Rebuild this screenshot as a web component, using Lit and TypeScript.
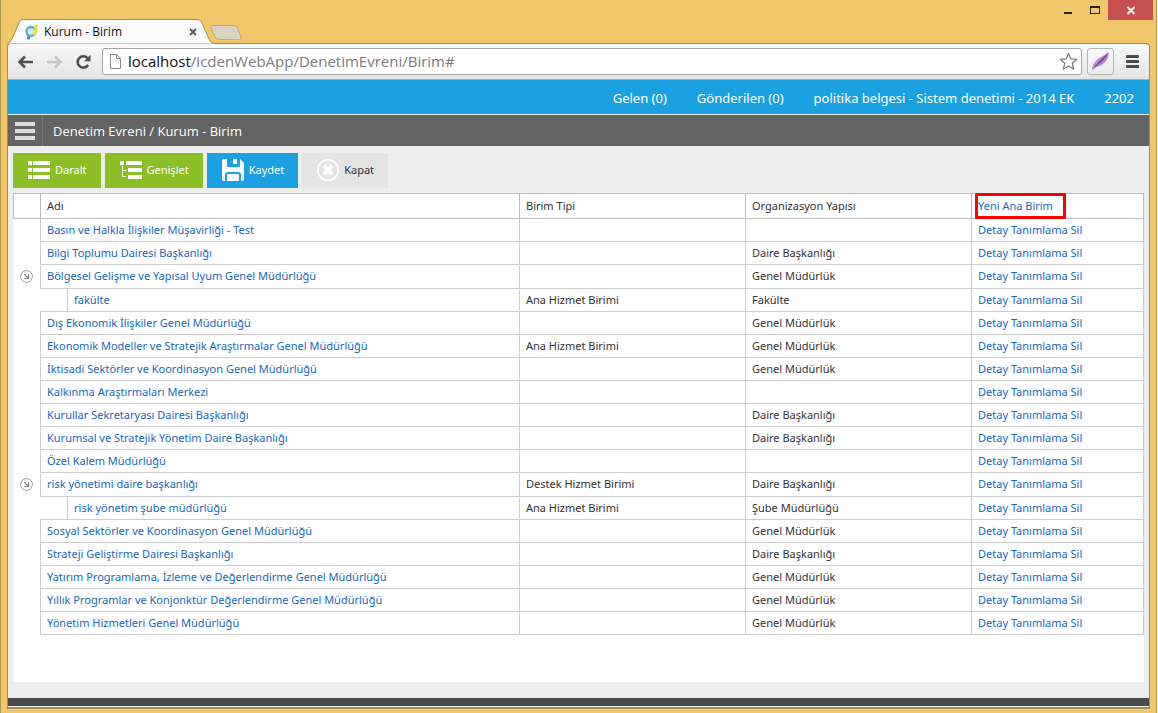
import { LitElement, html, css, svg, nothing } from "lit";
import { customElement, property } from "lit/decorators.js";

interface Unit {
  name: string;
  type?: string;
  org?: string;
  children?: Unit[];
}

const UNITS: Unit[] = [
  { name: "Basın ve Halkla İlişkiler Müşavirliği - Test" },
  { name: "Bilgi Toplumu Dairesi Başkanlığı", org: "Daire Başkanlığı" },
  {
    name: "Bölgesel Gelişme ve Yapısal Uyum Genel Müdürlüğü",
    org: "Genel Müdürlük",
    children: [{ name: "fakülte", type: "Ana Hizmet Birimi", org: "Fakülte" }],
  },
  { name: "Dış Ekonomik İlişkiler Genel Müdürlüğü", org: "Genel Müdürlük" },
  {
    name: "Ekonomik Modeller ve Stratejik Araştırmalar Genel Müdürlüğü",
    type: "Ana Hizmet Birimi",
    org: "Genel Müdürlük",
  },
  { name: "İktisadi Sektörler ve Koordinasyon Genel Müdürlüğü", org: "Genel Müdürlük" },
  { name: "Kalkınma Araştırmaları Merkezi" },
  { name: "Kurullar Sekretaryası Dairesi Başkanlığı", org: "Daire Başkanlığı" },
  { name: "Kurumsal ve Stratejik Yönetim Daire Başkanlığı", org: "Daire Başkanlığı" },
  { name: "Özel Kalem Müdürlüğü" },
  {
    name: "risk yönetimi daire başkanlığı",
    type: "Destek Hizmet Birimi",
    org: "Daire Başkanlığı",
    children: [
      { name: "risk yönetim şube müdürlüğü", type: "Ana Hizmet Birimi", org: "Şube Müdürlüğü" },
    ],
  },
  { name: "Sosyal Sektörler ve Koordinasyon Genel Müdürlüğü", org: "Genel Müdürlük" },
  { name: "Strateji Geliştirme Dairesi Başkanlığı", org: "Daire Başkanlığı" },
  { name: "Yatırım Programlama, İzleme ve Değerlendirme Genel Müdürlüğü", org: "Genel Müdürlük" },
  { name: "Yıllık Programlar ve Konjonktür Değerlendirme Genel Müdürlüğü", org: "Genel Müdürlük" },
  { name: "Yönetim Hizmetleri Genel Müdürlüğü", org: "Genel Müdürlük" },
];

/** Title bar, tab strip and address bar of the browser window. */
@customElement("browser-chrome")
export class BrowserChrome extends LitElement {
  @property() tabTitle = "";
  @property() host_ = "";
  @property() path = "";

  static styles = css`
    :host {
      display: block;
      font-family: "Open Sans", "Noto Sans", sans-serif;
    }
    button {
      display: block;
      flex: none;
      padding: 0;
      border: 0;
      background: none;
      font: inherit;
      cursor: pointer;
    }
    svg {
      display: block;
    }
    .title {
      display: flex;
      justify-content: space-between;
      align-items: flex-start;
      height: 43px;
    }
    .tabs {
      display: flex;
      align-items: flex-end;
      height: 44px;
      position: relative;
      z-index: 1;
    }
    .tab {
      display: flex;
      align-items: center;
      position: relative;
      box-sizing: border-box;
      width: 208px;
      height: 25px;
      padding: 0 18px 0 18px;
      gap: 5px;
      font-size: 12px;
      line-height: 16px;
      color: #111;
    }
    .shape {
      position: absolute;
      left: 0;
      top: 0;
    }
    .tab > :not(.shape) {
      position: relative;
    }
    .label {
      flex: 1;
    }
    .new {
      margin: 0 0 3px -6px;
    }
    .controls {
      display: flex;
      margin-right: -3px;
    }
    .controls button {
      width: 27px;
      height: 20px;
    }
    .controls .close {
      width: 45px;
      background: #c75050;
    }
    .bar {
      display: flex;
      align-items: center;
      box-sizing: border-box;
      height: 37px;
      padding: 0 10px 0 9px;
      border: 1px solid #a58c55;
      border-bottom: 1px solid #a9a9a9;
      border-radius: 4px 4px 0 0;
      background: linear-gradient(#f9f9f9, #e4e4e4);
    }
    .nav {
      display: flex;
      gap: 12px;
      padding-right: 10px;
    }
    .address {
      display: flex;
      align-items: center;
      flex: 1;
      box-sizing: border-box;
      height: 27px;
      padding: 0 3px 0 5px;
      border: 1px solid #a6a6a6;
      border-radius: 3px;
      background: #fff;
      font-size: 15px;
      color: #111;
    }
    .address label {
      padding: 0 0 2px 5px;
      line-height: 22px;
    }
    .address input {
      flex: 1;
      min-width: 0;
      height: 24px;
      box-sizing: border-box;
      padding: 0 0 2px;
      border: 0;
      outline: 0;
      background: none;
      font: inherit;
      color: #7c7c7c;
    }
    .ext {
      width: 27px;
      height: 27px;
      margin: 0 12px 0 5px;
      border: 1px solid #b5b5b5;
      border-radius: 3px;
      background: linear-gradient(#fbfbfb, #e9e9e9);
    }
  `;

  render() {
    return html`
      <div class="title">
        <div class="tabs">
          <div class="tab">
            <svg class="shape" width="208" height="25" viewBox="0 0 208 25">
              <path
                d="M0 24.5 C3 24 4 22 5 20 L12 4 C13 1.500 14 .5 17 .5 H190 C193 .5 194 1.500 195 4 L202 20 C203 22.500 204 24 207.500 24.500"
                fill="#fafafa"
                stroke="#a58c55"
              />
            </svg>
            <svg width="14" height="16" viewBox="0 0 14 16">
              <circle cx="6" cy="7.500" r="4.500" fill="#d3e9dc" stroke="#4fb2e0" stroke-width="2.400" />
              <path d="M9 1.500 L12.800 .3 C12.600 5 12.400 9 9.500 12 L8.300 10.500 C9.500 8 9.500 5 9 1.500Z" fill="#dfe53c" />
              <circle cx="3.500" cy="13.900" r="1.700" fill="#2f8fd0" />
            </svg>
            <span class="label">${this.tabTitle}</span>
            <button aria-label="Close tab">
              <svg width="8" height="8" viewBox="0 0 8 8">
                <path d="M1 1 L7 7 M7 1 L1 7" stroke="#555" stroke-width="1.800" />
              </svg>
            </button>
          </div>
          <button class="new" aria-label="New tab">
            <svg width="34" height="17" viewBox="0 0 34 17">
              <path
                d="M3 1.500 H25 Q27.500 1.500 28.500 4 L32 13 Q33 15.500 30.500 15.500 H10 Q7 15.500 6 13 L2 4 Q1 1.500 3 1.500Z"
                fill="#d8d3c5"
                stroke="#c9a960"
              />
            </svg>
          </button>
        </div>
        <div class="controls">
          <button aria-label="Minimize">
            <svg width="27" height="20"><rect x="10" y="12" width="8" height="2" fill="#222" /></svg>
          </button>
          <button aria-label="Maximize">
            <svg width="27" height="20">
              <path d="M9 6 H19 V14 H9Z M10 8 V13 H18 V8Z" fill="#222" fill-rule="evenodd" />
            </svg>
          </button>
          <button class="close" aria-label="Close">
            <svg width="45" height="20">
              <path d="M19.500 7 L26.500 14 M26.500 7 L19.500 14" stroke="#fff" stroke-width="1.800" />
            </svg>
          </button>
        </div>
      </div>
      <div class="bar">
        <div class="nav">
          <button aria-label="Back">
            <svg width="17" height="16" viewBox="0 0 17 16">
              <path d="M8 2.500 L2.500 8 L8 13.500 M3 8 H16" fill="none" stroke="#505050" stroke-width="2.600" />
            </svg>
          </button>
          <button aria-label="Forward">
            <svg width="17" height="16" viewBox="0 0 17 16">
              <path d="M9 2.500 L14.500 8 L9 13.500 M14 8 H1" fill="none" stroke="#c6c6c6" stroke-width="2.600" />
            </svg>
          </button>
          <button aria-label="Reload">
            <svg width="17" height="16" viewBox="0 0 17 16">
              <path d="M13.200 11 A5.700 5.700 0 1 1 12.500 4" fill="none" stroke="#505050" stroke-width="2.600" />
              <path d="M15.500 .8 V7.300 H9Z" fill="#505050" />
            </svg>
          </button>
        </div>
        <div class="address">
          <svg width="15" height="17" viewBox="0 0 15 17">
            <path d="M2.500 1.500 H8.500 L12.500 5.500 V15.500 H2.500Z M8.500 1.500 V5.500 H12.500" fill="#fff" stroke="#8a8a8a" />
          </svg>
          <label for="url">${this.host_}</label>
          <input id="url" .value=${this.path} spellcheck="false" />
          <button aria-label="Bookmark">
            <svg width="19" height="19" viewBox="0 0 19 19">
              <path
                d="M9.500 1.300 L11.800 6.900 L17.800 7.300 L13.200 11.200 L14.700 17.200 L9.500 13.900 L4.300 17.200 L5.800 11.200 L1.200 7.300 L7.200 6.900Z"
                fill="#fff"
                stroke="#777"
                stroke-width="1.200"
                stroke-linejoin="round"
              />
            </svg>
          </button>
        </div>
        <button class="ext" aria-label="Extension">
          <svg width="25" height="25" viewBox="0 0 25 25">
            <path d="M4 21 C4 16 7 12 12 8.500 C16 6 19 5.500 20.500 3 C21 8 19 12 15 15 C11 18 7 17 4 21Z" fill="#b48ad2" />
            <path d="M4 21.500 C8 15 14 10 20.500 3 C18.500 9.500 11 14.500 4 21.500Z" fill="#7a3aa8" />
          </svg>
        </button>
        <button aria-label="Menu">
          <svg width="13" height="14">
            <rect width="13" height="3" rx="1" fill="#4a4a4a" />
            <rect y="5" width="13" height="3" rx="1" fill="#4a4a4a" />
            <rect y="10" width="13" height="3" rx="1" fill="#4a4a4a" />
          </svg>
        </button>
      </div>
    `;
  }
}

/** Tree grid listing the units with their type and organisation. */
@customElement("unit-table")
export class UnitTable extends LitElement {
  @property({ attribute: false }) units: Unit[] = [];

  static styles = css`
    :host {
      display: block;
      font-family: "Noto Sans", "Open Sans", sans-serif;
      font-size: 11px;
      line-height: 16px;
    }
    table {
      width: 100%;
      table-layout: fixed;
      border-collapse: separate;
      border-spacing: 0;
    }
    .c-toggle,
    .c-indent {
      width: 27px;
    }
    .c-mid {
      width: 226px;
    }
    .c-actions {
      width: 173px;
    }
    th,
    td {
      box-sizing: border-box;
      height: 23px;
      padding: 0 6px;
      border: 0 solid #ccc;
      border-width: 0 0 1px 1px;
      font-weight: normal;
      text-align: left;
      color: #333;
      white-space: nowrap;
    }
    th {
      height: 26px;
      border-top-width: 1px;
      border-color: #bdbdbd;
    }
    th:last-child,
    td:last-child {
      border-right-width: 1px;
    }
    .parent td {
      height: 24px;
      padding-bottom: 1px;
    }
    td.toggle {
      padding: 0 0 2px;
      border-width: 0;
    }
    td.indent {
      border-left-width: 0;
    }
    .toggle button {
      display: block;
      margin: 0 auto;
      padding: 0;
      border: 0;
      background: none;
    }
    svg {
      display: block;
    }
    a {
      color: #1468b8;
      text-decoration: none;
    }
    .mark {
      position: relative;
    }
    .ring {
      position: absolute;
      inset: -1px auto -1px 3px;
      width: 85px;
      border: 3px solid #f00;
      border-radius: 1px;
      pointer-events: none;
    }
  `;

  private row(u: Unit, child = false): unknown {
    return html`
      <tr class=${u.children ? "parent" : ""}>
        <td class="toggle">
          ${u.children
            ? html`<button aria-label="Daralt">
                <svg width="13" height="13" viewBox="0 0 13 13">
                  <circle cx="6.500" cy="6.500" r="5.900" fill="#fff" stroke="#999" />
                  <path d="M4 4 L8.500 8.500 M8.500 4.500 V8.500 H4.500" fill="none" stroke="#888" stroke-width="1.200" />
                </svg>
              </button>`
            : nothing}
        </td>
        ${child ? html`<td class="indent"></td>` : nothing}
        <td colspan=${child ? 1 : 2}><a href="#">${u.name}</a></td>
        <td>${u.type ?? nothing}</td>
        <td>${u.org ?? nothing}</td>
        <td><a href="#">Detay</a> <a href="#">Tanımlama</a> <a href="#">Sil</a></td>
      </tr>
      ${u.children?.map((c) => this.row(c, true))}
    `;
  }

  render() {
    return html`
      <table>
        <colgroup>
          <col class="c-toggle" />
          <col class="c-indent" />
          <col />
          <col class="c-mid" />
          <col class="c-mid" />
          <col class="c-actions" />
        </colgroup>
        <thead>
          <tr>
            <th></th>
            <th colspan="2">Adı</th>
            <th>Birim Tipi</th>
            <th>Organizasyon Yapısı</th>
            <th class="mark"><a href="#">Yeni Ana Birim</a><span class="ring"></span></th>
          </tr>
        </thead>
        <tbody>
          ${this.units.map((u) => this.row(u))}
        </tbody>
      </table>
    `;
  }
}

const collapseIcon = svg`<path fill="#fff" d="M0 2h4v4H0zM5 2h17v4H5zM0 9h4v4H0zM5 9h17v4H5zM0 16h4v4H0zM5 16h17v4H5z"/>`;
const expandIcon = svg`<path fill="#fff" d="M0 2h4v4H0zM6 2h16v4H6zM8 9h14v4H8zM8 16h14v4H8z"/><path d="M2.500 7v10.500h3.500M2.500 11.500h3.500" fill="none" stroke="#fff"/>`;
const saveIcon = svg`<path fill="#fff" fill-rule="evenodd" d="M2 0h3v7q0 1 1 1h11q1 0 1-1V0l4 4v16q0 2-2 2h-1v-6q0-3-3-3H6q-3 0-3 3v6H2q-2 0-2-2V2q0-2 2-2zM11 0h4v5h-4zM6 15h10q1 0 1 1v6H5v-6q0-1 1-1z"/>`;
const closeIcon = svg`<circle cx="11" cy="11" r="10.200" fill="none" stroke="#fff" stroke-width="1.600"/><path d="M7 7l8 8M15 7l-8 8" stroke="#fff" stroke-width="4.200"/>`;

@customElement("app-root")
export class AppRoot extends LitElement {
  static styles = css`
    :host {
      display: block;
      background: #f2f2f2;
      font-family: "Open Sans", "Noto Sans", sans-serif;
    }
    .window {
      display: flex;
      flex-direction: column;
      box-sizing: border-box;
      min-height: 100vh;
      margin-right: 1px;
      padding: 0 6px 4px 5px;
      border: 1px solid #b5964f;
      border-width: 0 1px 0 1px;
      background: #f0c869;
    }
    browser-chrome,
    .page {
      margin-left: 1px;
    }
    .page {
      display: flex;
      flex: 1;
      flex-direction: column;
      padding: 0 0 1px;
      border: 1px solid #a58c55;
      border-top: 0;
      background: #eee;
      border-bottom-width: 2px;
    }
    .top {
      display: flex;
      align-items: center;
      justify-content: flex-end;
      gap: 30px;
      height: 35px;
      padding: 2px 15px 0 0;
      box-sizing: border-box;
      border-bottom: 1px solid #eee;
      background: #1ba1e2;
      font: 13px/18px "Noto Sans", "Open Sans", sans-serif;
    }
    .top a {
      color: #fff;
      text-decoration: none;
    }
    .crumbs {
      display: flex;
      align-items: stretch;
      height: 31px;
      background: #636363;
      color: #fff;
    }
    .crumbs button {
      display: flex;
      align-items: center;
      width: 35px;
      padding: 0 0 0 7px;
      border: 0;
      border-right: 1px solid #757575;
      background: none;
    }
    .crumbs h1 {
      margin: 0;
      padding: 0 10px;
      font-size: 13px;
      font-weight: normal;
      line-height: 32px;
    }
    .tools {
      display: flex;
      gap: 4px;
      padding: 7px 5px 5px;
    }
    .tools button {
      display: flex;
      align-items: center;
      gap: 5px;
      height: 35px;
      padding: 0 14px 1px 15px;
      border: 0;
      background: #8cbf26;
      color: #fff;
      font: 11px/16px "Noto Sans", "Open Sans", sans-serif;
    }
    .tools .save {
      background: #1ba1e2;
    }
    .tools .cancel {
      background: #e4e4e4;
      color: #333;
    }
    .panel {
      flex: 1;
      margin: 0 5px 16px;
      background: #fff;
    }
    footer {
      height: 8px;
      background: #4b4b4b;
    }
  `;

  private tool(label: string, icon: unknown, kind = "") {
    return html`<button class=${kind}>
      <svg width="22" height="22" viewBox="0 0 22 22">${icon}</svg>${label}
    </button>`;
  }

  render() {
    return html`
      <div class="window">
        <browser-chrome
          tabTitle="Kurum - Birim"
          host_="localhost"
          path="/icdenWebApp/DenetimEvreni/Birim#"
        ></browser-chrome>
        <div class="page">
          <nav class="top">
            <a href="#">Gelen (0)</a>
            <a href="#">Gönderilen (0)</a>
            <a href="#">politika belgesi - Sistem denetimi - 2014 EK</a>
            <a href="#">2202</a>
          </nav>
          <header class="crumbs">
            <button aria-label="Menü">
              <svg width="20" height="18">
                <path d="M0 0h20v4H0zM0 7h20v4H0zM0 14h20v4H0z" fill="#ddd" />
              </svg>
            </button>
            <h1>Denetim Evreni / Kurum - Birim</h1>
          </header>
          <div class="tools">
            ${this.tool("Daralt", collapseIcon)} ${this.tool("Genişlet", expandIcon)}
            ${this.tool("Kaydet", saveIcon, "save")} ${this.tool("Kapat", closeIcon, "cancel")}
          </div>
          <main class="panel">
            <unit-table .units=${UNITS}></unit-table>
          </main>
          <footer></footer>
        </div>
      </div>
    `;
  }
}
